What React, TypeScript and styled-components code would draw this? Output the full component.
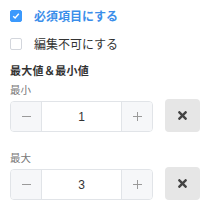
import React, { useState } from "react";
import styled, { createGlobalStyle } from "styled-components";
import { FaTimes } from "react-icons/fa";

const GlobalStyle = createGlobalStyle`
  html, body {
    margin: 0;
    padding: 0;
    background: #fff;
  }
  body {
    font-family: "Noto Sans CJK JP", "Noto Sans", sans-serif;
    color: #333;
  }
`;

const Panel = styled.div`
  padding: 6px 10px 0;
  width: 213px;
  box-sizing: border-box;
`;

const CheckRow = styled.label`
  display: flex;
  align-items: center;
  height: 20px;
  margin-bottom: 8px;
  cursor: pointer;
`;

const Box = styled.span<{ $checked: boolean }>`
  width: 12px;
  height: 12px;
  box-sizing: border-box;
  border-radius: 2px;
  border: 1px solid ${(p) => (p.$checked ? "#3b99fc" : "#d3d6dc")};
  background: ${(p) => (p.$checked ? "#3b99fc" : "#fff")};
  display: flex;
  align-items: center;
  justify-content: center;
  margin-right: 12px;
`;

const CheckText = styled.span<{ $checked: boolean }>`
  font-size: 12px;
  line-height: 20px;
  font-weight: ${(p) => (p.$checked ? 700 : 400)};
  color: ${(p) => (p.$checked ? "#3b8eea" : "#333")};
`;

const SectionTitle = styled.div`
  font-size: 11px;
  line-height: 16px;
  font-weight: 700;
  color: #333;
  letter-spacing: 0.3px;
  margin-top: 2px;
  margin-bottom: 4px;
`;

const Field = styled.div`
  margin-bottom: 18px;
`;

const FieldLabel = styled.div`
  font-size: 10.5px;
  line-height: 16px;
  color: #777;
  margin-bottom: 1px;
`;

const Row = styled.div`
  display: flex;
  align-items: flex-end;
  gap: 12px;
`;

const Stepper = styled.div`
  display: flex;
  width: 143px;
  height: 31px;
  box-sizing: border-box;
  border: 1px solid #e1e4e8;
  border-radius: 4px;
  overflow: hidden;
`;

const StepButton = styled.button<{ $side: "left" | "right" }>`
  width: 31px;
  flex: none;
  border: none;
  padding: 0;
  background: #f6f7f9;
  ${(p) => (p.$side === "left" ? "border-right" : "border-left")}: 1px solid #e1e4e8;
  display: flex;
  align-items: center;
  justify-content: center;
  cursor: pointer;
`;

const Value = styled.div`
  flex: 1;
  display: flex;
  align-items: center;
  justify-content: center;
  font-family: "Liberation Sans", Arial, sans-serif;
  font-size: 12px;
  color: #333;
  background: #fff;
`;

const ClearButton = styled.button`
  width: 35px;
  height: 33px;
  border: none;
  border-radius: 4px;
  background: #e6e6e6;
  color: #444;
  display: flex;
  align-items: center;
  justify-content: center;
  padding: 0;
  cursor: pointer;
`;

function Check({ checked, label, onToggle }: { checked: boolean; label: string; onToggle: () => void }) {
  return (
    <CheckRow onClick={onToggle}>
      <Box $checked={checked}>
        {checked && (
          <svg width="8" height="8" viewBox="0 0 8 8">
            <path d="M1.2 4.2 L3.1 6 L6.8 1.8" fill="none" stroke="#fff" strokeWidth="1.4" />
          </svg>
        )}
      </Box>
      <CheckText $checked={checked}>{label}</CheckText>
    </CheckRow>
  );
}

function NumberField({ label, value, setValue }: { label: string; value: number; setValue: (n: number) => void }) {
  return (
    <Field>
      <FieldLabel>{label}</FieldLabel>
      <Row>
        <Stepper>
          <StepButton $side="left" onClick={() => setValue(value - 1)}>
            <svg width="9" height="9" viewBox="0 0 9 9">
              <line x1="0" y1="4.5" x2="9" y2="4.5" stroke="#9a9a9a" strokeWidth="1" />
            </svg>
          </StepButton>
          <Value>{value}</Value>
          <StepButton $side="right" onClick={() => setValue(value + 1)}>
            <svg width="9" height="9" viewBox="0 0 9 9">
              <line x1="0" y1="4.5" x2="9" y2="4.5" stroke="#9a9a9a" strokeWidth="1" />
              <line x1="4.5" y1="0" x2="4.5" y2="9" stroke="#9a9a9a" strokeWidth="1" />
            </svg>
          </StepButton>
        </Stepper>
        <ClearButton>
          <FaTimes size={13} />
        </ClearButton>
      </Row>
    </Field>
  );
}

export default function App() {
  const [required, setRequired] = useState(true);
  const [readonly, setReadonly] = useState(false);
  const [min, setMin] = useState(1);
  const [max, setMax] = useState(3);

  return (
    <>
      <GlobalStyle />
      <Panel>
        <Check checked={required} label="必須項目にする" onToggle={() => setRequired(!required)} />
        <Check checked={readonly} label="編集不可にする" onToggle={() => setReadonly(!readonly)} />
        <SectionTitle>最大値＆最小値</SectionTitle>
        <NumberField label="最小" value={min} setValue={setMin} />
        <NumberField label="最大" value={max} setValue={setMax} />
      </Panel>
    </>
  );
}
